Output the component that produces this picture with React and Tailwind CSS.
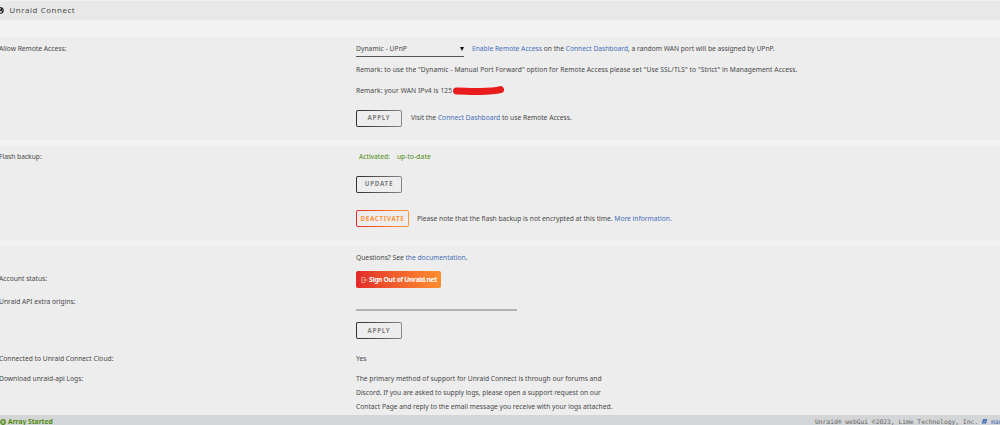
import { FaBook, FaGlobeAmericas } from "react-icons/fa";

function Row({ label, className = "", children }) {
  return (
    <div className={`flex items-center whitespace-nowrap ${className}`}>
      <div className="-ml-px w-[357px] shrink-0">{label}</div>
      {children}
    </div>
  );
}

function Link({ children }) {
  return <a className="text-[#486dba]">{children}</a>;
}

function OutlineButton({ children }) {
  return (
    <button className="h-[17px] w-[46px] shrink-0 rounded-[2px] bg-gradient-to-r from-[#303030] to-[#888] p-px">
      <span className="flex h-full items-center justify-center rounded-[1px] bg-[#ededed] pt-px text-[6.2px] leading-none font-bold tracking-[0.75px] text-[#808080]">
        {children}
      </span>
    </button>
  );
}

export default function App() {
  return (
    <div className="flex h-[425px] w-[1000px] flex-col overflow-hidden bg-[#f2f2f2] font-['Noto_Sans',sans-serif] text-[6.7px] leading-[14px] text-[#484848]">
      {/* Page title */}
      <header className="flex h-5 shrink-0 items-center border-t border-[#f0f0f0] bg-[#e8e8e8]">
        <FaGlobeAmericas className="-mt-px -ml-[3px] size-[7px] text-[#222]" />
        <h1 className="-mt-px ml-[5.500px] text-[7.8px] tracking-[0.62px]">Unraid Connect</h1>
      </header>

      {/* Remote access */}
      <section className="mt-[17px] h-[103px] shrink-0 bg-[#ededed]">
        <Row label="Allow Remote Access:" className="h-[23px]">
          <div className="mt-[1px] flex h-[16px] w-[108px] items-center justify-between border-b border-[#555]">
            <span className="tracking-[0.06px]">Dynamic - UPnP</span>
            <svg viewBox="0 0 4 4" className="size-1 text-[#111]">
              <path d="M0 0h4L2 4z" fill="currentColor" />
            </svg>
          </div>
          <p className="ml-2">
            <Link>Enable Remote Access</Link> on the <Link>Connect Dashboard</Link>, a random WAN port will be
            assigned by UPnP.
          </p>
        </Row>
        <Row className="h-5 tracking-[0.06px]">
          Remark: to use the "Dynamic - Manual Port Forward" option for Remote Access please set "Use SSL/TLS" to
          "Strict" in Management Access.
        </Row>
        <Row className="h-5 pt-px tracking-[0.06px]">
          <span>Remark: your WAN IPv4 is 125</span>
          {/* Redacted address */}
          <svg viewBox="0 0 52 10" className="h-[10px] w-[52px]">
            <path
              d="M4.500 5C12 4.900 17 5.700 24 5.500S41 5.500 48.500 3.600"
              fill="none"
              stroke="#e81c1c"
              strokeWidth="7"
              strokeLinecap="round"
            />
          </svg>
        </Row>
        <Row className="h-9">
          <OutlineButton>APPLY</OutlineButton>
          <p className="ml-[9px]">
            Visit the <Link>Connect Dashboard</Link> to use Remote Access.
          </p>
        </Row>
      </section>

      {/* Flash backup */}
      <section className="mt-[5px] h-24 shrink-0 bg-[#ededed]">
        <Row label="Flash backup:" className="h-[23px]">
          <p className="ml-[3px] flex gap-[7px] text-[#4f8a10]">
            <span>Activated:</span>
            <span className="tracking-[0.08px]">up-to-date</span>
          </p>
        </Row>
        <Row className="h-8">
          <OutlineButton>UPDATE</OutlineButton>
        </Row>
        <Row className="h-[37px]">
          <button className="h-[17px] w-[53px] shrink-0 rounded-[2px] bg-gradient-to-r from-[#e22828] to-[#ff9a3c] p-px">
            <span className="flex h-full items-center justify-center rounded-[1px] bg-[#ededed] pt-px text-[6.2px] leading-none font-bold tracking-[0.7px] text-[#ff9440]">
              DEACTIVATE
            </span>
          </button>
          <p className="ml-2">
            Please note that the flash backup is not encrypted at this time. <Link>More information.</Link>
          </p>
        </Row>
      </section>

      {/* Account and API */}
      <section className="mt-[5px] min-h-0 flex-1 bg-[#ededed]">
        <Row className="h-[23px]">
          <p>
            Questions? See <Link>the documentation</Link>.
          </p>
        </Row>
        <Row label={<span className="relative -top-px">Account status:</span>} className="h-[21px]">
          <button className="flex h-[17px] w-[85px] items-center justify-center gap-[2px] rounded-[2px] bg-gradient-to-r from-[#e22828] to-[#ff8c2f] pl-px text-[6.7px] font-bold tracking-[-0.3px] text-white">
            <svg viewBox="0 0 12 12" className="size-[6px]" fill="none" stroke="currentColor" strokeWidth="1">
              <path d="M7.500 3.500V1h-6v10h6V8.500M4 6h7M9 4l2 2-2 2" />
            </svg>
            Sign Out of Unraid.net
          </button>
        </Row>
        <Row label="Unraid API extra origins:" className="h-[23px]">
          <input className="mt-[2px] h-[17px] w-[161px] border-b-2 border-[#b2b2b2] outline-none" />
        </Row>
        <Row className="h-[35px]">
          <OutlineButton>APPLY</OutlineButton>
        </Row>
        <Row label="Connected to Unraid Connect Cloud:" className="h-5 pt-px">
          Yes
        </Row>
        <div className="flex pt-1">
          <div className="-ml-px w-[357px] shrink-0">Download unraid-api Logs:</div>
          <p className="whitespace-nowrap">
            The primary method of support for Unraid Connect is through our forums and
            <br />
            Discord. If you are asked to supply logs, please open a support request on our
            <br />
            Contact Page and reply to the email message you receive with your logs attached.
          </p>
        </div>
      </section>

      {/* Status bar */}
      <footer className="flex h-[10px] shrink-0 items-center justify-between bg-[#d4d5d6] whitespace-nowrap">
        <div className="mt-[4px] flex items-center gap-[2px] font-bold text-[#4f8a10]">
          <svg viewBox="0 0 6 6" className="size-[6px]">
            <circle cx="3" cy="3" r="2.2" fill="none" stroke="currentColor" strokeWidth="1.4" />
            <circle cx="3" cy="3" r="1.4" fill="#d4d5d6" />
            <path d="M2.500 2v2l1.500-1z" fill="currentColor" />
          </svg>
          Array Started
        </div>
        <div className="mt-[3px] flex w-[185px] shrink-0 items-center font-['DejaVu_Sans_Mono',monospace] text-[6.3px] text-[#666]">
          <span>Unraid® webGui ©2023, Lime Technology, Inc.</span>
          <FaBook className="mx-1 size-[5px] shrink-0 -skew-x-12 text-[#486dba]" />
          <Link>manual</Link>
        </div>
      </footer>
    </div>
  );
}
